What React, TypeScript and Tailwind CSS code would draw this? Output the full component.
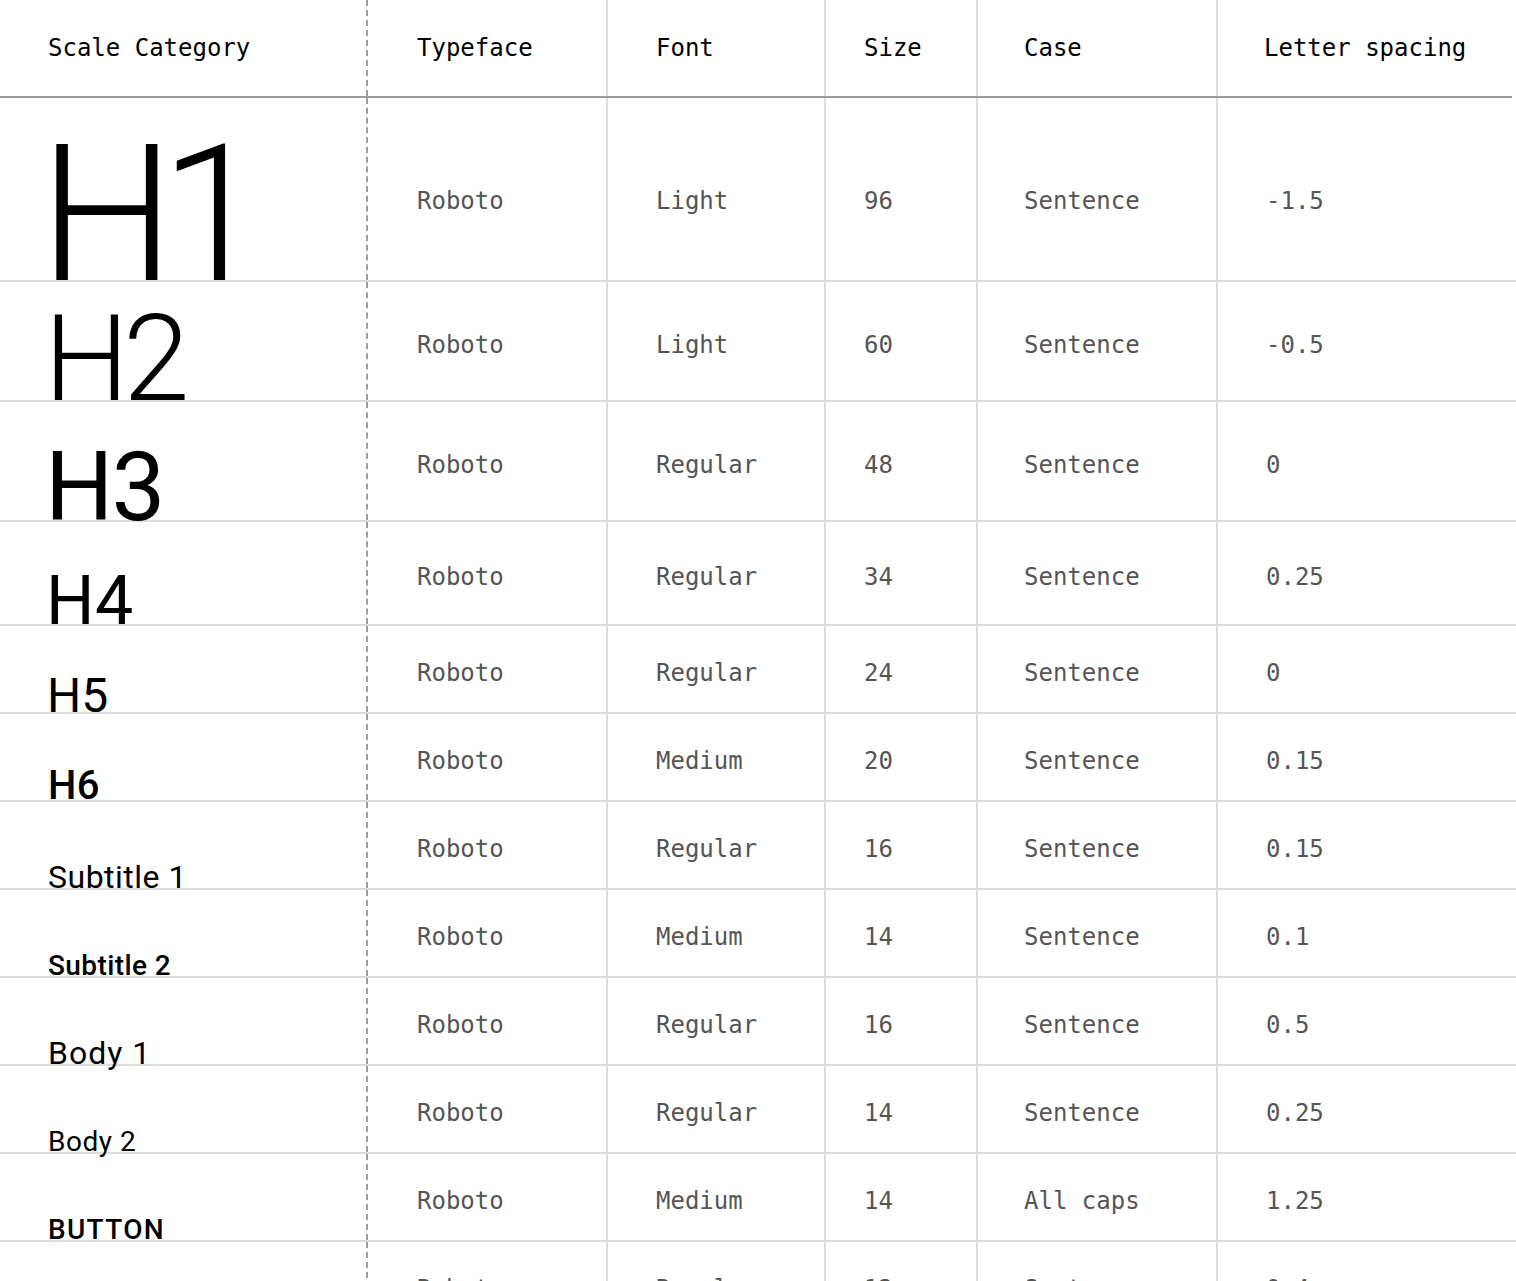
import React from "react";

type Row = {
  label: string;
  cls: string;
  h: string;
  cellPad: string;
  font: string;
  size: string;
  kase: string;
  ls: string;
};

const rows: Row[] = [
  { label: "H1", cls: "text-[192px] font-light tracking-[-15px] ml-[-9px]", h: "h-[184px]", cellPad: "pt-[24px]", font: "Light", size: "96", kase: "Sentence", ls: "-1.5" },
  { label: "H2", cls: "text-[120px] font-light tracking-[-6px] ml-[-4px]", h: "h-[120px]", cellPad: "pt-[8px]", font: "Light", size: "60", kase: "Sentence", ls: "-0.5" },
  { label: "H3", cls: "text-[96px] font-normal tracking-[-2px] ml-[-3px]", h: "h-[120px]", cellPad: "pt-[8px]", font: "Regular", size: "48", kase: "Sentence", ls: "0" },
  { label: "H4", cls: "text-[68px] font-normal tracking-[0.5px] ml-[-2px]", h: "h-[104px]", cellPad: "pt-[8px]", font: "Regular", size: "34", kase: "Sentence", ls: "0.25" },
  { label: "H5", cls: "text-[48px] font-normal ml-[-1px]", h: "h-[88px]", cellPad: "pt-[8px]", font: "Regular", size: "24", kase: "Sentence", ls: "0" },
  { label: "H6", cls: "text-[40px] font-medium tracking-[0.3px]", h: "h-[88px]", cellPad: "pt-[8px]", font: "Medium", size: "20", kase: "Sentence", ls: "0.15" },
  { label: "Subtitle 1", cls: "text-[32px] font-normal tracking-[0.5px]", h: "h-[88px]", cellPad: "pt-[8px]", font: "Regular", size: "16", kase: "Sentence", ls: "0.15" },
  { label: "Subtitle 2", cls: "text-[28px] font-medium tracking-[0.4px]", h: "h-[88px]", cellPad: "pt-[8px]", font: "Medium", size: "14", kase: "Sentence", ls: "0.1" },
  { label: "Body 1", cls: "text-[32px] font-normal tracking-[1px]", h: "h-[88px]", cellPad: "pt-[8px]", font: "Regular", size: "16", kase: "Sentence", ls: "0.5" },
  { label: "Body 2", cls: "text-[28px] font-normal tracking-[0.5px]", h: "h-[88px]", cellPad: "pt-[8px]", font: "Regular", size: "14", kase: "Sentence", ls: "0.25" },
  { label: "BUTTON", cls: "text-[28px] font-medium tracking-[1.3px]", h: "h-[88px]", cellPad: "pt-[8px]", font: "Medium", size: "14", kase: "All caps", ls: "1.25" },
  { label: "Caption", cls: "text-[24px] font-normal tracking-[0.8px]", h: "h-[88px]", cellPad: "pt-[8px]", font: "Regular", size: "12", kase: "Sentence", ls: "0.4" },
  { label: "OVERLINE", cls: "text-[20px] font-normal tracking-[3px]", h: "h-[88px]", cellPad: "pt-[8px]", font: "Regular", size: "10", kase: "All caps", ls: "1.5" },
];

const mono = "font-['DejaVu_Sans_Mono','Liberation_Mono',monospace] text-[24px]";
const grid = "grid grid-cols-[366px_240px_218px_152px_240px_1fr]";

export default function App() {
  return (
    <div className="w-[1516px] overflow-hidden bg-white">
      {/* Header */}
      <div className={`${grid} h-[98px] w-[1512px] border-b-2 border-[#9a9a9a] ${mono} text-black`}>
        <div className="flex items-center pl-[48px]">Scale Category</div>
        <div className="flex items-center pl-[49px] border-l-2 border-dashed border-[#9e9e9e]">Typeface</div>
        <div className="flex items-center pl-[48px] border-l-2 border-[#dddddd]">Font</div>
        <div className="flex items-center pl-[38px] border-l-2 border-[#dddddd]">Size</div>
        <div className="flex items-center pl-[46px] border-l-2 border-[#dddddd]">Case</div>
        <div className="flex items-center pl-[46px] border-l-2 border-[#dddddd]">Letter spacing</div>
      </div>
      {rows.map((r) => (
        <div key={r.label} className={`${grid} ${r.h} border-b-2 border-[#dddddd]`}>
          <div className="flex items-end pl-[48px] font-['Roboto',sans-serif] text-black whitespace-nowrap">
            <span className={`${r.cls} leading-none mb-[-0.16em]`}>{r.label}</span>
          </div>
          <div className={`flex items-center pl-[49px] border-l-2 border-dashed border-[#9e9e9e] ${mono} text-[#555555] ${r.cellPad}`}>Roboto</div>
          <div className={`flex items-center pl-[48px] border-l-2 border-[#dddddd] ${mono} text-[#555555] ${r.cellPad}`}>{r.font}</div>
          <div className={`flex items-center pl-[38px] border-l-2 border-[#dddddd] ${mono} text-[#555555] ${r.cellPad}`}>{r.size}</div>
          <div className={`flex items-center pl-[46px] border-l-2 border-[#dddddd] ${mono} text-[#555555] ${r.cellPad}`}>{r.kase}</div>
          <div className={`flex items-center pl-[48px] border-l-2 border-[#dddddd] ${mono} text-[#555555] ${r.cellPad}`}>{r.ls}</div>
        </div>
      ))}
    </div>
  );
}
